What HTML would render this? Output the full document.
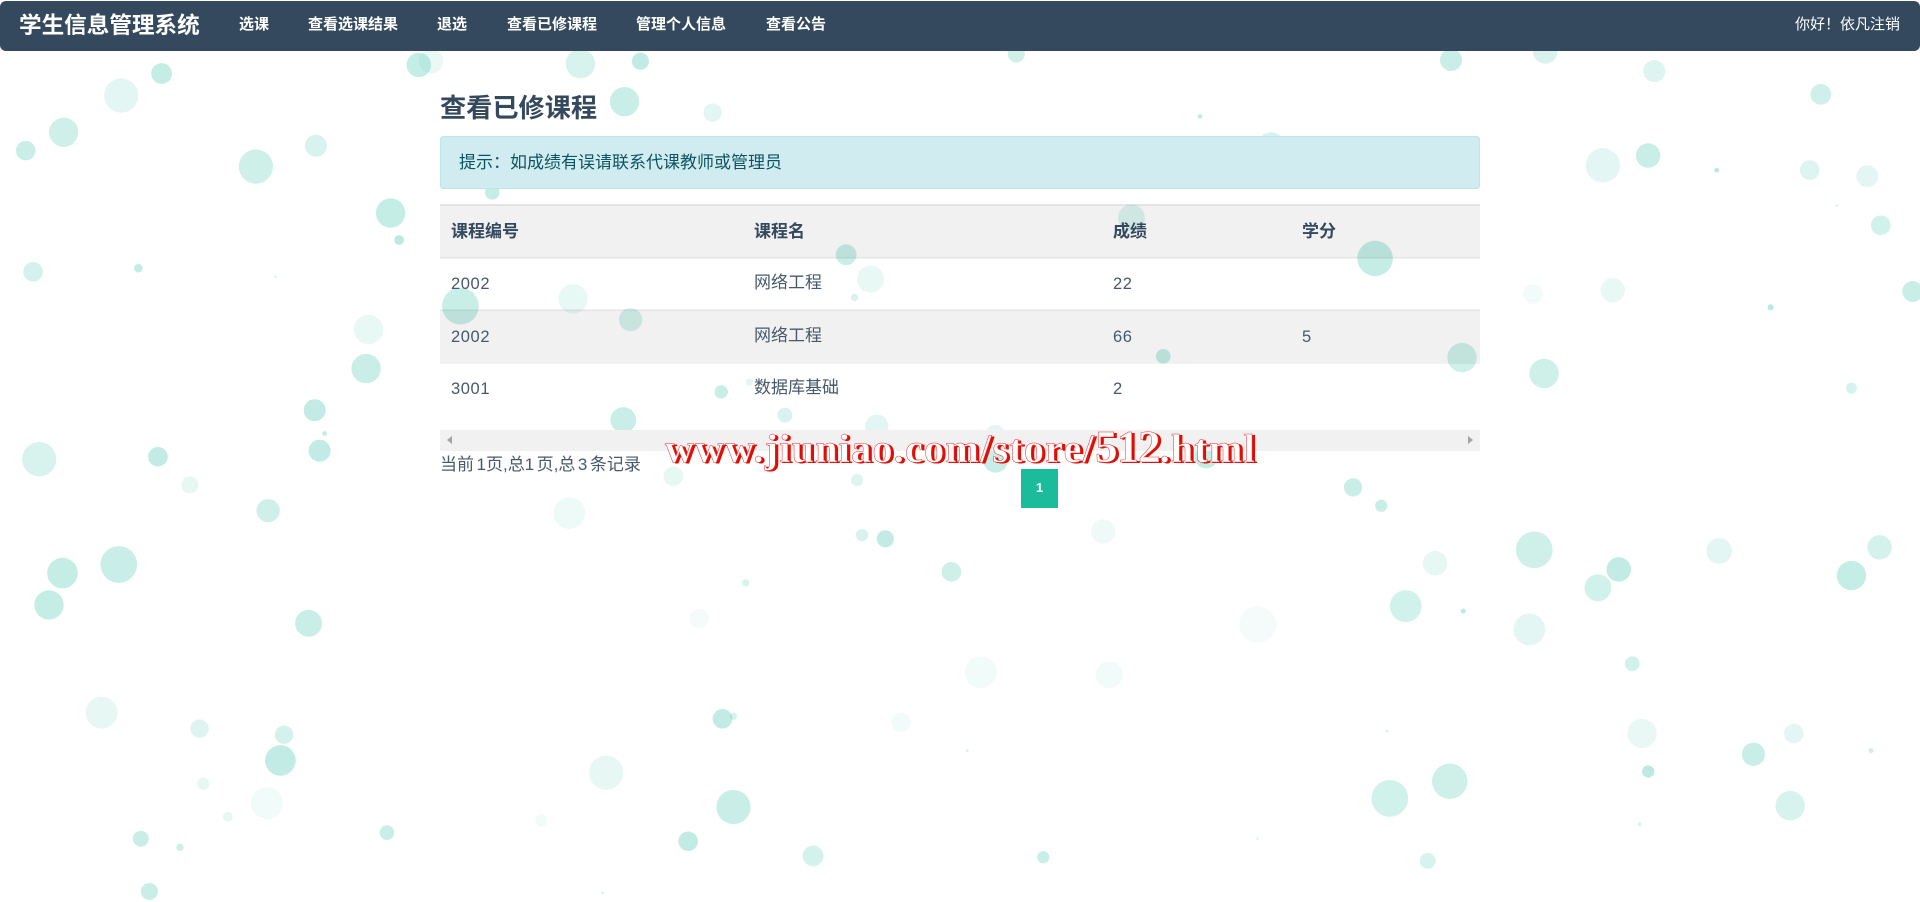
<!DOCTYPE html>
<html lang="zh">
<head>
<meta charset="utf-8">
<title>查看已修课程</title>
<style>
html,body{margin:0;padding:0;background:#fff;width:1920px;height:902px;overflow:hidden}
body{font-family:"Liberation Sans","Noto Sans CJK SC",sans-serif;color:#34495e;position:relative}
.abs{position:absolute;white-space:nowrap}
#bg{position:absolute;left:0;top:0;width:1920px;height:902px;opacity:.86}
#bg circle{fill:#1fb89c}
.nav{position:absolute;left:0;top:1px;width:1920px;height:50px;background:#34495e;border-radius:6px}
.nav .abs{color:#fff;line-height:20px;top:14px;font-size:15px;font-weight:700}
.nav .brand{left:19px;top:10px;font-size:22.6px;line-height:30px}
.nav .r{font-weight:400;left:1795px}
h1{position:absolute;left:440px;top:91px;margin:0;font-size:26.2px;line-height:34px;color:#34495e;font-weight:700}
.alert{position:absolute;left:440px;top:136px;width:1038px;height:51px;background:#d1ecf1;border:1px solid #bee5eb;border-radius:3px}
.alert span{position:absolute;left:18px;top:13px;font-size:17px;line-height:26px;color:#0c5460;white-space:nowrap}
.strip{position:absolute;left:440px;width:1040px;background:rgba(0,0,0,.055)}
.line{position:absolute;left:440px;width:1040px;height:2px;background:rgba(0,0,0,.05)}
.t{position:absolute;font-size:17px;line-height:26px;white-space:nowrap;color:#47596b}
.n{font-size:16.5px;letter-spacing:.6px;margin-top:1px}
.th{font-weight:700;color:#34495e}
.sb{position:absolute;left:440px;top:430px;width:1040px;height:21px;background:#f1f1f1}
.al{position:absolute;left:7px;top:6px;width:0;height:0;border:4.5px solid transparent;border-left:0;border-right:5px solid #a3a3a3}
.ar{position:absolute;right:7px;top:6px;width:0;height:0;border:4.5px solid transparent;border-right:0;border-left:5px solid #a3a3a3}
.pg{position:absolute;left:1021px;top:469px;width:37px;height:39px;background:#1abc9c;color:#fff;font-size:13px;font-weight:700;line-height:38px;text-align:center}
.wm{position:absolute;left:665px;top:420px;white-space:nowrap;font-family:"Liberation Serif",serif;font-weight:700;font-size:40px;line-height:54px;letter-spacing:1.3px;color:#fff;-webkit-text-stroke:.5px #e8303a;text-shadow:2px 1px 0 #e00d00,3px 1px 0 #e00d00}
.wm b{font-size:45px;letter-spacing:-1px}
</style>
</head>
<body>
<svg id="bg" viewBox="0 0 1568 736.6" xmlns="http://www.w3.org/2000/svg">
<circle cx="99" cy="78" r="14" opacity=".14"/><circle cx="132" cy="60" r="8.5" opacity=".3"/><circle cx="52" cy="108" r="12" opacity=".25"/><circle cx="21" cy="123" r="8" opacity=".28"/><circle cx="209" cy="136" r="14" opacity=".25"/><circle cx="258" cy="119" r="9" opacity=".2"/><circle cx="319" cy="174" r="12" opacity=".3"/><circle cx="326" cy="196" r="4" opacity=".35"/><circle cx="27" cy="222" r="8" opacity=".22"/><circle cx="113" cy="219" r="3.5" opacity=".3"/><circle cx="225" cy="226" r="1" opacity=".2"/>
<circle cx="301" cy="269" r="12" opacity=".12"/><circle cx="299" cy="301" r="12" opacity=".28"/><circle cx="257" cy="335" r="9" opacity=".32"/><circle cx="265" cy="354" r="2" opacity=".3"/><circle cx="261" cy="368" r="9" opacity=".32"/><circle cx="32" cy="375" r="14" opacity=".2"/><circle cx="129" cy="373" r="8" opacity=".32"/><circle cx="155" cy="396" r="7" opacity=".13"/><circle cx="219" cy="417" r="9.5" opacity=".25"/><circle cx="51" cy="468" r="12.5" opacity=".3"/><circle cx="97" cy="461" r="15" opacity=".28"/><circle cx="40" cy="494" r="12" opacity=".3"/><circle cx="252" cy="509" r="11" opacity=".28"/><circle cx="83" cy="582" r="13" opacity=".13"/><circle cx="163" cy="595" r="7.5" opacity=".18"/><circle cx="232" cy="600" r="7.5" opacity=".22"/><circle cx="229" cy="621" r="12.5" opacity=".32"/><circle cx="166" cy="640" r="5" opacity=".13"/><circle cx="218" cy="656" r="13" opacity=".07"/><circle cx="186" cy="667" r="4" opacity=".13"/><circle cx="115" cy="685" r="6.5" opacity=".28"/><circle cx="147" cy="692" r="3" opacity=".25"/><circle cx="316" cy="680" r="6" opacity=".28"/><circle cx="122" cy="728" r="7" opacity=".28"/>
<circle cx="342" cy="53" r="10" opacity=".3"/><circle cx="352" cy="50" r="10" opacity=".1"/><circle cx="474" cy="52" r="12" opacity=".2"/><circle cx="523" cy="50" r="7" opacity=".32"/><circle cx="510" cy="83" r="12" opacity=".28"/><circle cx="582" cy="92" r="7.5" opacity=".14"/><circle cx="402" cy="157" r="6" opacity=".3"/><circle cx="830" cy="44" r="7" opacity=".25"/><circle cx="980" cy="95" r="2" opacity=".3"/><circle cx="1038" cy="120" r="12" opacity=".2"/><circle cx="1185" cy="49" r="9" opacity=".28"/><circle cx="1262" cy="42" r="10" opacity=".2"/><circle cx="1351" cy="58" r="9" opacity=".18"/><circle cx="1487" cy="77" r="8.5" opacity=".25"/><circle cx="1309" cy="135" r="14" opacity=".14"/><circle cx="1346" cy="127" r="10" opacity=".28"/><circle cx="1402" cy="139" r="2" opacity=".35"/><circle cx="1478" cy="139" r="8" opacity=".18"/><circle cx="1525" cy="144" r="9" opacity=".14"/><circle cx="1500" cy="168" r="1" opacity=".2"/><circle cx="1536" cy="184" r="8" opacity=".24"/><circle cx="1562" cy="238" r="8.5" opacity=".28"/><circle cx="1446" cy="251" r="2.5" opacity=".35"/><circle cx="1252" cy="240" r="8" opacity=".07"/><circle cx="1317" cy="237" r="10" opacity=".12"/>
<circle cx="376" cy="250" r="15" opacity=".28"/><circle cx="468" cy="244" r="12" opacity=".12"/><circle cx="515" cy="261" r="9.5" opacity=".22"/><circle cx="691" cy="208" r="8.5" opacity=".28"/><circle cx="711" cy="228" r="11" opacity=".12"/><circle cx="698" cy="243" r="3" opacity=".2"/><circle cx="924" cy="178" r="11" opacity=".18"/><circle cx="1123" cy="211" r="14.5" opacity=".3"/><circle cx="1194" cy="292" r="12" opacity=".26"/><circle cx="950" cy="291" r="6" opacity=".3"/><circle cx="1261" cy="305" r="12" opacity=".26"/><circle cx="1512" cy="317" r="4.5" opacity=".2"/><circle cx="589" cy="320" r="5.5" opacity=".28"/><circle cx="612" cy="312" r="3" opacity=".14"/><circle cx="641" cy="339" r="6" opacity=".2"/><circle cx="509" cy="343" r="10.5" opacity=".28"/><circle cx="716" cy="348" r="9.5" opacity=".14"/><circle cx="813" cy="355" r="8" opacity=".14"/><circle cx="813" cy="376" r="10" opacity=".28"/><circle cx="985" cy="373" r="9.5" opacity=".3"/><circle cx="550" cy="389" r="8" opacity=".13"/><circle cx="700" cy="392" r="5" opacity=".18"/><circle cx="465" cy="419" r="13" opacity=".09"/><circle cx="704" cy="437" r="5" opacity=".2"/><circle cx="723" cy="440" r="7" opacity=".32"/><circle cx="901" cy="434" r="10" opacity=".08"/><circle cx="777" cy="467" r="8" opacity=".25"/><circle cx="609" cy="476" r="3" opacity=".2"/><circle cx="1105" cy="398" r="7.5" opacity=".28"/><circle cx="1128" cy="413" r="5" opacity=".28"/><circle cx="1253" cy="449" r="15" opacity=".26"/><circle cx="1172" cy="460" r="10" opacity=".13"/><circle cx="1404" cy="450" r="10.5" opacity=".14"/><circle cx="1535" cy="447" r="10" opacity=".22"/><circle cx="1512" cy="470" r="12" opacity=".3"/><circle cx="1322" cy="465" r="10" opacity=".32"/><circle cx="1305" cy="480" r="11" opacity=".24"/><circle cx="1148" cy="495" r="13" opacity=".24"/><circle cx="1195" cy="499" r="2" opacity=".35"/><circle cx="1249" cy="514" r="13" opacity=".14"/><circle cx="1027" cy="510" r="15" opacity=".05"/><circle cx="571" cy="505" r="8" opacity=".05"/><circle cx="801" cy="549" r="13" opacity=".07"/><circle cx="906" cy="551" r="11" opacity=".07"/><circle cx="1333" cy="542" r="6" opacity=".24"/>
<circle cx="590" cy="587" r="8" opacity=".32"/><circle cx="599" cy="585" r="3" opacity=".2"/><circle cx="736" cy="590" r="8" opacity=".07"/><circle cx="790" cy="613" r="1.2" opacity=".2"/><circle cx="1133" cy="597" r="1.2" opacity=".2"/><circle cx="1341" cy="599" r="12" opacity=".11"/><circle cx="1465" cy="599" r="8" opacity=".14"/><circle cx="1528" cy="613" r="2" opacity=".25"/><circle cx="1432" cy="616" r="9.5" opacity=".28"/><circle cx="1346" cy="630" r="5" opacity=".35"/><circle cx="495" cy="631" r="14" opacity=".13"/><circle cx="599" cy="659" r="14" opacity=".28"/><circle cx="1135" cy="652" r="15" opacity=".24"/><circle cx="1184" cy="638" r="14.5" opacity=".26"/><circle cx="1462" cy="658" r="12" opacity=".2"/><circle cx="442" cy="670" r="5" opacity=".07"/><circle cx="1339" cy="673" r="1.5" opacity=".2"/><circle cx="562" cy="687" r="8" opacity=".32"/><circle cx="664" cy="699" r="8.5" opacity=".22"/><circle cx="852" cy="700" r="5" opacity=".28"/><circle cx="1166" cy="703" r="6.5" opacity=".2"/><circle cx="1027" cy="685" r="1.2" opacity=".15"/><circle cx="492" cy="729" r="1.2" opacity=".2"/>
</svg>

<div class="nav">
<div class="abs brand">学生信息管理系统</div>
<div class="abs" style="left:239px">选课</div>
<div class="abs" style="left:308px">查看选课结果</div>
<div class="abs" style="left:437px">退选</div>
<div class="abs" style="left:507px">查看已修课程</div>
<div class="abs" style="left:636px">管理个人信息</div>
<div class="abs" style="left:766px">查看公告</div>
<div class="abs r">你好！依凡注销</div>
</div>

<h1>查看已修课程</h1>
<div class="alert"><span>提示：如成绩有误请联系代课教师或管理员</span></div>

<div class="strip" style="top:204px;height:54px"></div>
<div class="line" style="top:204px"></div>
<div class="line" style="top:257px"></div>
<div class="strip" style="top:310px;height:52px"></div>
<div class="line" style="top:309px"></div>
<div class="line" style="top:362px"></div>

<div class="t th" style="left:451px;top:219px">课程编号</div>
<div class="t th" style="left:754px;top:219px">课程名</div>
<div class="t th" style="left:1113px;top:219px">成绩</div>
<div class="t th" style="left:1302px;top:219px">学分</div>

<div class="t n" style="left:451px;top:270px">2002</div>
<div class="t" style="left:754px;top:270px">网络工程</div>
<div class="t n" style="left:1113px;top:270px">22</div>

<div class="t n" style="left:451px;top:323px">2002</div>
<div class="t" style="left:754px;top:323px">网络工程</div>
<div class="t n" style="left:1113px;top:323px">66</div>
<div class="t n" style="left:1302px;top:323px">5</div>

<div class="t n" style="left:451px;top:375px">3001</div>
<div class="t" style="left:754px;top:375px">数据库基础</div>
<div class="t n" style="left:1113px;top:375px">2</div>

<div class="sb"><div class="al"></div><div class="ar"></div></div>
<div class="t" style="left:440px;top:452px;word-spacing:-2.2px">当前 1页,总1 页,总 3 条记录</div>
<div class="pg">1</div>

<div class="wm">www.jiuniao.com/store/<b>512</b>.html</div>
</body>
</html>
